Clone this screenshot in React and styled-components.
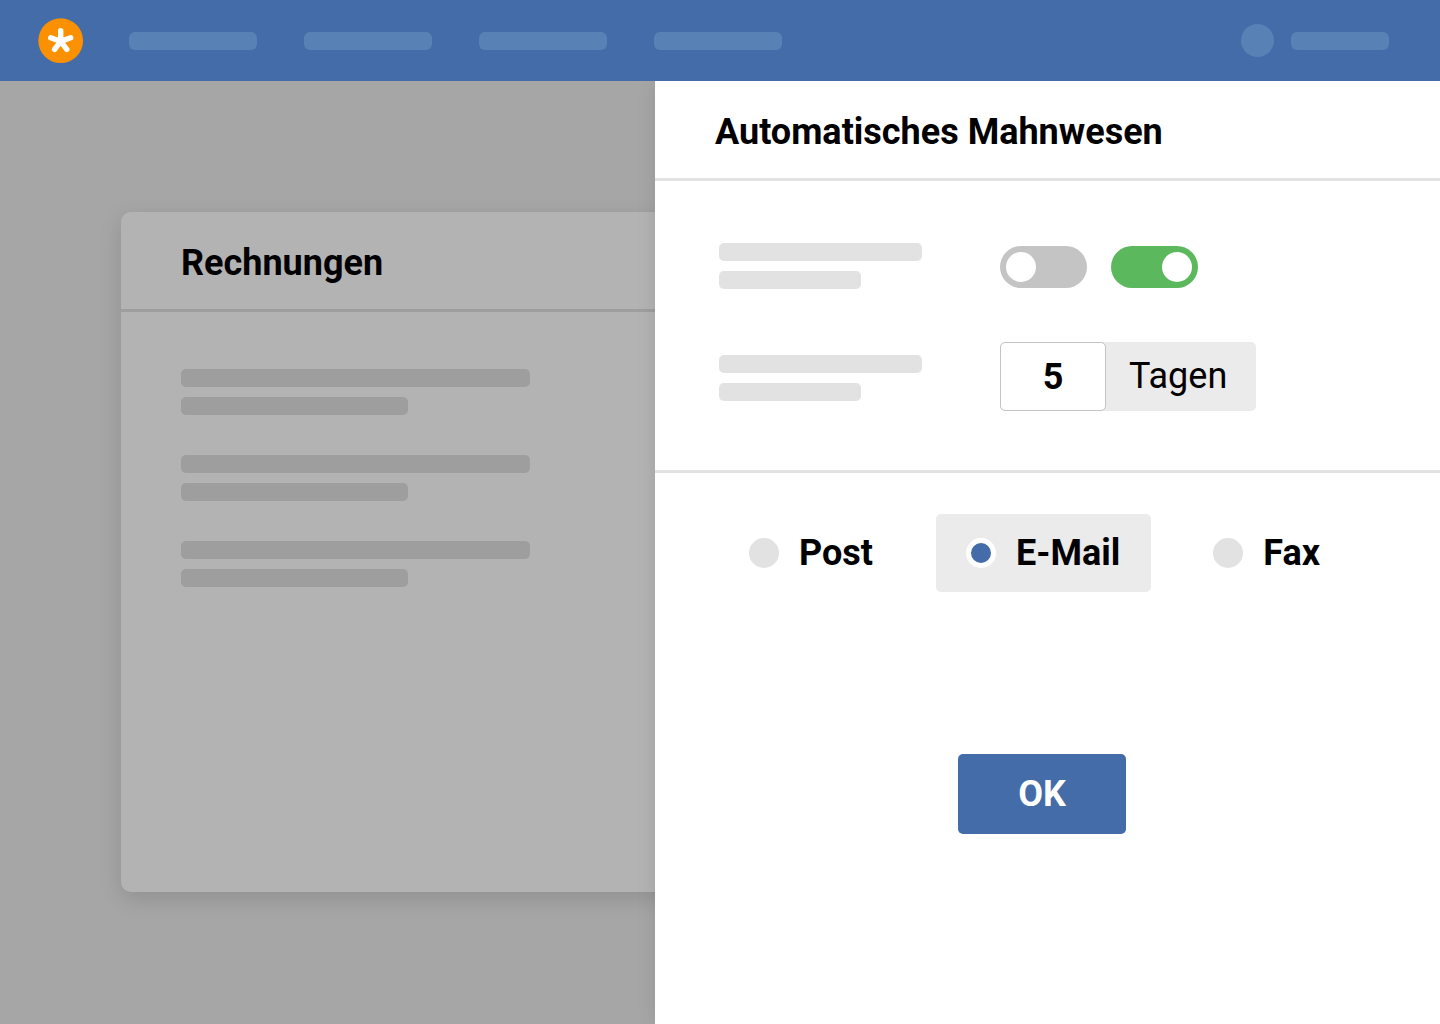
import React, { useState } from "react";
import styled, { createGlobalStyle } from "styled-components";

const GlobalStyle = createGlobalStyle`
  *, *::before, *::after { box-sizing: border-box; }
  body { margin: 0; background: #a6a6a6; color: #000; font-family: Roboto, sans-serif; font-size: 36px; line-height: 42px; }
  #root { min-height: 100vh; display: flex; flex-direction: column; }
  button, input { font: inherit; color: inherit; }
`;

const TopBar = styled.header`
  display: flex;
  align-items: center;
  height: 81px;
  padding: 0 51px 0 38px;
  background: #446ca8;
  position: relative;
  z-index: 2;
`;

const Logo = styled.svg`
  display: block;
  width: 46px;
  height: 46px;
  flex: none;
`;

const Nav = styled.nav`
  display: flex;
  gap: 47px;
  margin-left: 45px;
`;

const Account = styled.div`
  display: flex;
  align-items: center;
  gap: 17px;
  margin-left: auto;
`;

const Avatar = styled.div`
  width: 33px;
  height: 33px;
  border-radius: 50%;
  background: #5882b6;
`;

const Bar = styled.div`
  width: ${(p) => p.$width}px;
  height: 18px;
  border-radius: ${(p) => p.$radius || 5}px;
  background: ${(p) => p.$color};
`;

const Workspace = styled.main`
  flex: 1;
  display: grid;
  grid-template-columns: minmax(0, 1fr) 785px;
`;

const Backdrop = styled.div`
  display: flex;
  overflow: hidden;
  padding: 131px 0 132px 121px;
`;

const Card = styled.section`
  flex: 1;
  margin-right: -40px;
  border-radius: 10px;
  background: #b3b3b3;
  box-shadow: 0 7px 22px rgba(0, 0, 0, 0.13);
`;

const PanelHead = styled.div`
  height: 100px;
  padding: 30px 60px 0;
  border-bottom: 3px solid ${(p) => p.$line};
`;

const Title = styled.h2`
  margin: 0;
  font-size: 36px;
  line-height: 42px;
  font-weight: 700;
`;

const InvoiceList = styled.div`
  display: flex;
  flex-direction: column;
  gap: 40px;
  padding: 57px 60px;
`;

const Lines = styled.div`
  display: flex;
  flex-direction: column;
  gap: 10px;
`;

const Drawer = styled.aside`
  position: relative;
  z-index: 1;
  background: #fff;
  box-shadow: 0 0 18px rgba(0, 0, 0, 0.1);
`;

const Settings = styled.div`
  display: flex;
  gap: 78px;
  padding: 62px 64px 59px;
  border-bottom: 3px solid #e2e2e2;
`;

const Labels = styled.div`
  display: flex;
  flex-direction: column;
  gap: 66px;
`;

const Controls = styled.div`
  display: flex;
  flex-direction: column;
  gap: 54px;
  padding-top: 3px;
`;

const Toggles = styled.div`
  display: flex;
  gap: 24px;
`;

const Toggle = styled.input`
  appearance: none;
  display: flex;
  width: 87px;
  height: 42px;
  margin: 0;
  padding: 6px;
  border-radius: 21px;
  background: #c4c4c4;
  cursor: pointer;

  &::before {
    content: "";
    width: 30px;
    height: 30px;
    border-radius: 50%;
    background: #fff;
  }
  &:checked {
    justify-content: flex-end;
    background: #5cb85c;
  }
`;

const DaysField = styled.label`
  display: flex;
  width: 256px;
  height: 69px;
  border-radius: 5px;
  background: #ebebeb;
`;

const DaysInput = styled.input`
  width: 106px;
  padding: 0;
  border: 1px solid #c4c4c4;
  border-radius: 5px;
  background: #fff;
  text-align: center;
  font-weight: 700;
`;

const Unit = styled.span`
  padding: 13px 23px;
`;

const Delivery = styled.form`
  display: flex;
  flex-direction: column;
  gap: 162px;
  padding: 41px 75px 60px 64px;
`;

const Options = styled.div`
  display: flex;
  gap: 32px;
`;

const Option = styled.label`
  display: flex;
  align-items: center;
  gap: 20px;
  height: 78px;
  padding: 0 31px 0 30px;
  border-radius: 5px;
  font-weight: 700;
  cursor: pointer;

  &:has(input:checked) { background: #ebebeb; }
`;

const Radio = styled.input`
  appearance: none;
  width: 30px;
  height: 30px;
  margin: 0;
  border-radius: 50%;
  background: #e2e2e2;

  &:checked {
    border: 5px solid #fff;
    background: #446ca8;
  }
`;

const OkButton = styled.button`
  align-self: center;
  width: 168px;
  height: 80px;
  padding: 0;
  border: 0;
  border-radius: 5px;
  background: #446ca8;
  color: #fff;
  font-weight: 700;
  cursor: pointer;
`;

function LinePair({ wide, narrow, color }) {
  return (
    <Lines>
      <Bar $width={wide} $color={color} />
      <Bar $width={narrow} $color={color} />
    </Lines>
  );
}

export default function App() {
  const [days, setDays] = useState("5");
  const [method, setMethod] = useState("E-Mail");

  return (
    <>
      <GlobalStyle />
      <TopBar>
        <Logo viewBox="0 0 46 46" aria-hidden="true">
          <circle cx="22.7" cy="22.7" r="22.4" fill="#fb9100" />
          <path
            d="M22.7 23.4V12.7M22.7 23.4L32.7 19.7M22.7 23.4L28.8 31.4M22.7 23.4L16.6 31.4M22.7 23.4L12.7 19.7"
            stroke="#fff"
            strokeWidth="5.4"
            strokeLinecap="round"
            fill="none"
          />
        </Logo>
        <Nav>
          {[1, 2, 3, 4].map((n) => (
            <Bar key={n} $width={128} $radius={6} $color="#5882b6" />
          ))}
        </Nav>
        <Account>
          <Avatar />
          <Bar $width={98} $radius={6} $color="#5882b6" />
        </Account>
      </TopBar>
      <Workspace>
        <Backdrop>
          <Card>
            <PanelHead $line="#9e9e9e">
              <Title>Rechnungen</Title>
            </PanelHead>
            <InvoiceList>
              {[1, 2, 3].map((n) => (
                <LinePair key={n} wide={349} narrow={227} color="#9e9e9e" />
              ))}
            </InvoiceList>
          </Card>
        </Backdrop>
        <Drawer>
          <PanelHead $line="#e2e2e2">
            <Title>Automatisches Mahnwesen</Title>
          </PanelHead>
          <Settings>
            <Labels>
              <LinePair wide={203} narrow={142} color="#e2e2e2" />
              <LinePair wide={203} narrow={142} color="#e2e2e2" />
            </Labels>
            <Controls>
              <Toggles>
                <Toggle type="checkbox" role="switch" aria-label="Aus" />
                <Toggle type="checkbox" role="switch" aria-label="An" defaultChecked />
              </Toggles>
              <DaysField>
                <DaysInput value={days} inputMode="numeric" onChange={(e) => setDays(e.target.value)} />
                <Unit>Tagen</Unit>
              </DaysField>
            </Controls>
          </Settings>
          <Delivery onSubmit={(e) => e.preventDefault()}>
            <Options>
              {["Post", "E-Mail", "Fax"].map((name) => (
                <Option key={name}>
                  <Radio
                    type="radio"
                    name="method"
                    value={name}
                    checked={method === name}
                    onChange={() => setMethod(name)}
                  />
                  {name}
                </Option>
              ))}
            </Options>
            <OkButton type="submit">OK</OkButton>
          </Delivery>
        </Drawer>
      </Workspace>
    </>
  );
}
